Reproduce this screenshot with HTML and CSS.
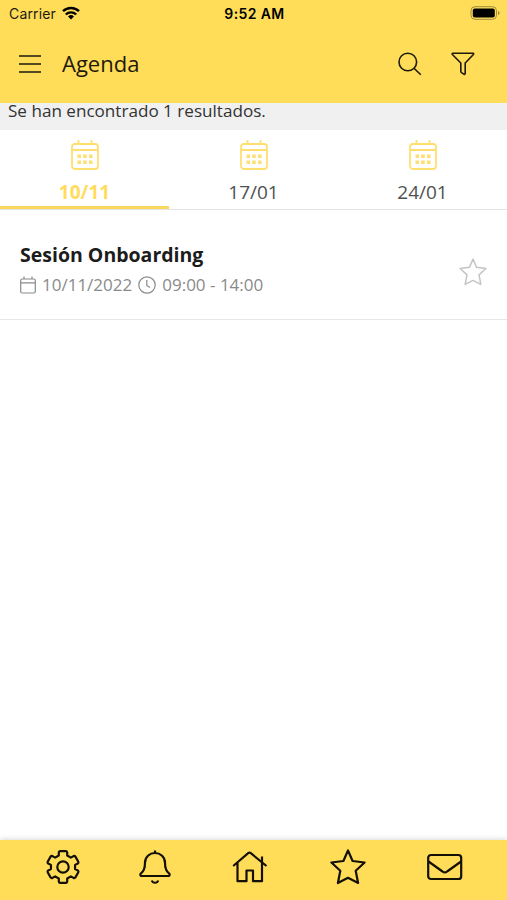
FILE: index.html
```html
<!doctype html>
<html lang="es">
<head>
  <meta charset="utf-8">
  <meta name="viewport" content="width=device-width, initial-scale=1">
  <title>Agenda</title>
  <link rel="stylesheet" href="styles.css">
</head>
<body>
  <svg class="defs" width="0" height="0">
    <symbol id="calendario" viewBox="0 0 28 32">
      <rect x="1" y="5" width="26" height="25" rx="3"/>
      <path d="M1 11h26M7.500 1v4M20.500 1v4"/>
      <path class="puntos" d="M6.500 15.500h3.500v3.500h-3.500zM12.200 15.500h3.500v3.500h-3.500zM18 15.500h3.500v3.500h-3.500zM6.500 21.500h3.500v3.500h-3.500zM12.200 21.500h3.500v3.500h-3.500zM18 21.500h3.500v3.500h-3.500z"/>
    </symbol>
    <symbol id="estrella" viewBox="0 0 36 36">
      <path d="M18 1.500l4.600 10.500 12 1.500-8.900 8.200 2.400 12.300L18 28.800 7.900 34l2.400-12.300-8.900-8.200 12-1.500z"/>
    </symbol>
  </svg>

  <header class="cabecera">
    <div class="estado">
      <div class="operador">
        <span>Carrier</span>
        <svg class="wifi" viewBox="0 0 18 14">
          <path d="M1 5.200a11.500 11.500 0 0 1 16 0M3.800 8.500a7.500 7.500 0 0 1 10.400 0"/>
          <path class="relleno" d="M9 13.500l-3-3.100a4.300 4.300 0 0 1 6 0z"/>
        </svg>
      </div>
      <span class="hora">9:52 AM</span>
      <svg class="bateria" viewBox="0 0 30 14">
        <rect class="borde" x="1" y=".7" width="25.500" height="12.600" rx="4"/>
        <rect x="2.800" y="2.500" width="22" height="9" rx="2"/>
        <path class="polo" d="M28 5c2 .5 2 3.500 0 4z"/>
      </svg>
    </div>
    <div class="barra">
      <svg class="menu" viewBox="0 0 22 18"><path d="M0 1h22M0 9h22M0 17h22"/></svg>
      <h1>Agenda</h1>
      <svg class="buscar" viewBox="0 0 24 24"><circle cx="9.800" cy="10" r="8.800"/><path d="M16 16.200l6.800 6.600"/></svg>
      <svg class="filtro" viewBox="0 0 24 24"><path d="M1.700 1.300h20.400q1 .2.300 1.200L14.200 11v10.500q-.2 1.300-1.300.7l-2.400-1.600q-.7-.6-.7-1.500V11L1.400 2.500q-.6-.9.300-1.200z"/></svg>
    </div>
  </header>

  <p class="resultados">Se han encontrado 1 resultados.</p>

  <nav class="fechas">
    <div class="fecha activa"><svg><use href="#calendario"/></svg><span>10/11</span></div>
    <div class="fecha"><svg><use href="#calendario"/></svg><span>17/01</span></div>
    <div class="fecha"><svg><use href="#calendario"/></svg><span>24/01</span></div>
  </nav>

  <main>
    <article class="sesion">
      <div class="datos">
        <h2>Sesión Onboarding</h2>
        <div class="horario">
          <svg class="dia" viewBox="0 0 16 18"><rect x=".7" y="3" width="14.600" height="14" rx="1.500"/><path d="M.7 6.800h14.600M4 .5V3M12 .5V3"/></svg>
          <span>10/11/2022</span>
          <svg class="reloj" viewBox="0 0 18 18"><circle cx="9" cy="9" r="8.200"/><path d="M8.800 4v5.400l3.200 2"/></svg>
          <span>09:00 - 14:00</span>
        </div>
      </div>
      <svg class="favorito"><use href="#estrella"/></svg>
    </article>
  </main>

  <footer class="pie">
    <svg class="ajustes" viewBox="0 0 34 34">
      <path d="M12.800 5.500V2.400q.1-1.100 1.200-1.200h6q1.100.1 1.200 1.200v3.100l3.660 2.110 2.650-1.500q1.200-.5 1.900.5l2.900 5.100q.5 1.100-.5 1.800l-2.750 1.380v4.220l2.750 1.380q1 .7.500 1.800l-2.900 5.100q-.7 1-1.900.5l-2.650-1.500-3.660 2.110v3.100q-.1 1.100-1.200 1.200h-6q-1.100-.1-1.200-1.200v-3.100l-3.660-2.110-2.650 1.500q-1.200.5-1.900-.5l-2.900-5.100q-.5-1.100.5-1.800l2.750-1.380v-4.220l-2.750-1.380q-1-.7-.5-1.800l2.900-5.100q.7-1 1.900-.5l2.650 1.500z"/>
      <circle cx="17" cy="17" r="5.700"/>
    </svg>
    <svg class="avisos" viewBox="0 0 32 36">
      <path d="M16 1.500v2.300M2 27h28q1.400-1.300 0-2.600c-3.500-2.700-4-6.200-4-10.700C26 8 21.500 4 16 4S6 8 6 13.700c0 4.500-.5 8-4 10.700q-1.400 1.300 0 2.600zM12.800 31.500c1 3 5.400 3 6.400 0"/>
    </svg>
    <svg class="inicio" viewBox="0 0 36 32">
      <path d="M1.200 15L16.200 2.200q1.300-1 2.600 0L34.500 15M5.500 12v18.200h9V19.500h6.500v10.700h9V5.500"/>
    </svg>
    <svg class="favoritos"><use href="#estrella"/></svg>
    <svg class="correo" viewBox="0 0 36 28">
      <rect x="1.200" y="2" width="33" height="24" rx="2.800"/>
      <path d="M1.500 8.500l14 10q2.300 1.800 4.600 0l14-10"/>
    </svg>
  </footer>
</body>
</html>
```

FILE: styles.css
```css
* {
    box-sizing: border-box;
}
body {
    display: flex;
    flex-direction: column;
    height: 100vh;
    margin: 0;
    overflow: hidden;
    background-color: #fff;
    color: #333;
    font-family: "Open Sans", sans-serif;
}
h1, h2, p {
    margin: 0;
}
svg {
    display: block;
    flex: none;
    overflow: visible;
    fill: none;
    stroke: currentColor;
    stroke-linejoin: round;
}
.defs {
    position: absolute;
}

/* Cabecera */
.cabecera {
    height: 103px;
    background-color: #ffdd59;
    color: #1d1a0c;
}
.estado {
    display: grid;
    grid-template-columns: 1fr auto 1fr;
    align-items: center;
    height: 27px;
    padding: 0 7px 0 9px;
    font-family: Inter, sans-serif;
    font-size: 14px;
}
.operador {
    display: flex;
    align-items: center;
    gap: 6px;
    letter-spacing: .15px;
}
.wifi {
    width: 18px;
    height: 14px;
    margin-top: -2px;
    color: #000;
    stroke-width: 2.4;
}
.wifi .relleno {
    fill: #000;
    stroke: none;
}
.hora {
    font-weight: 600;
    letter-spacing: .4px;
    color: #000;
}
.bateria {
    width: 30px;
    height: 14px;
    margin-top: -1px;
    justify-self: end;
    fill: #000;
    stroke: none;
}
.bateria .borde {
    fill: none;
    stroke: #a08c3c;
}
.bateria .polo {
    fill: #a08c3c;
}
.barra {
    display: flex;
    align-items: center;
    height: 73px;
    padding: 0 32.5px 0 19px;
}
.barra h1 {
    margin: -2px auto 0 21px;
    font-size: 22px;
    font-weight: 400;
}
.menu {
    width: 22px;
    height: 18px;
    margin-top: 1px;
    stroke-width: 1.7;
}
.buscar, .filtro {
    width: 24px;
    height: 24px;
    stroke-width: 1.6;
}
.filtro {
    margin-left: 29px;
}

.resultados {
    height: 27px;
    padding-left: 8px;
    background-color: #f0f0f0;
    font-size: 17.1px;
    line-height: 16px;
}

/* Pestañas de fechas */
.fechas {
    display: grid;
    grid-template-columns: repeat(3, 1fr);
    height: 80px;
    border-bottom: 1px solid #e4e4e4;
}
.fecha {
    display: flex;
    flex-direction: column;
    align-items: center;
    padding-top: 9px;
    border-bottom: 3px solid transparent;
    color: #505050;
    font-size: 19px;
    line-height: 26px;
}
.fecha svg {
    width: 28px;
    height: 32px;
    margin-bottom: 8px;
    color: #ffdf70;
    stroke-width: 1.8;
}
.puntos {
    fill: currentColor;
    stroke: none;
}
.activa {
    border-color: #fbd95f;
    color: #ffdc5e;
    font-weight: 700;
}

main {
    flex: 1;
}
.sesion {
    display: flex;
    align-items: center;
    justify-content: space-between;
    height: 110px;
    padding: 0 20px;
    border-bottom: 1px solid #e8e8e8;
}
.datos {
    padding-top: 10px;
}
.sesion h2 {
    color: #1c1c1c;
    font-size: 19.5px;
    line-height: 30px;
}
.horario {
    display: flex;
    align-items: center;
    gap: 6px;
    height: 30px;
    color: #8a8a8a;
    font-size: 17px;
}
.dia {
    width: 16px;
    height: 18px;
    stroke-width: 1.2;
}
.reloj {
    width: 18px;
    height: 18px;
    stroke-width: 1.2;
}
.favorito {
    width: 28px;
    height: 28px;
    margin-top: 15px;
    color: #c4c4c4;
    stroke-width: 1.9;
}

/* Barra inferior */
.pie {
    display: flex;
    align-items: center;
    justify-content: space-between;
    height: 60px;
    padding: 0 44px 6px 46px;
    background-color: #ffdd59;
    box-shadow: 0 0 6px rgba(0, 0, 0, .2);
    color: #141006;
    stroke-width: 2.2;
}
.ajustes {
    width: 34px;
    height: 34px;
}
.avisos {
    width: 32px;
    height: 36px;
    margin-left: -3px;
}
.inicio {
    width: 36px;
    height: 32px;
}
.favoritos {
    width: 36px;
    height: 36px;
}
.correo {
    width: 36px;
    height: 28px;
}
```
